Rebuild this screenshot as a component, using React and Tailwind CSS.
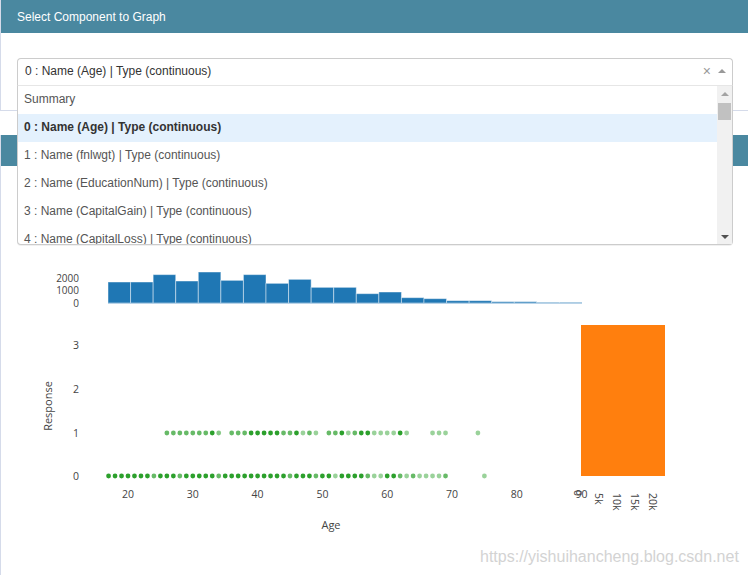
import React from "react";

const hist = [1680, 1680, 2270, 1760, 2480, 1813, 2270, 1573, 1893, 1253, 1253, 747, 880, 427, 347, 187, 187, 107, 107, 53, 53];

const ax = (a) => 128 + (a - 20) * 6.48;

const D = 1, M = 0.72, L = 0.48;

const row0 = {};
for (let a = 17; a <= 51; a++) row0[a] = D;
[24, 28, 34, 45, 49].forEach((a) => (row0[a] = M));
Object.assign(row0, {
  52: L, 53: D, 54: D, 55: D, 56: D, 57: M, 58: L, 59: L, 60: D, 61: D, 62: M, 63: L,
  64: M, 65: L, 66: L, 67: L, 68: L, 69: M, 75: L,
});

const row1 = {};
for (let a = 26; a <= 34; a++) row1[a] = M;
row1[33] = D;
row1[34] = L + 0.1;
Object.assign(row1, {
  36: M, 37: M, 38: M, 39: D, 40: D, 41: D, 42: D, 43: D, 44: M, 45: M, 46: D, 47: L, 48: M, 49: L,
  51: M, 52: M, 53: D, 54: L, 55: M, 56: D, 57: D, 58: L, 59: L, 60: L, 61: L, 62: D, 63: L,
  67: L, 68: L, 69: L, 74: L,
});

const options = [
  "Summary",
  "0 : Name (Age) | Type (continuous)",
  "1 : Name (fnlwgt) | Type (continuous)",
  "2 : Name (EducationNum) | Type (continuous)",
  "3 : Name (CapitalGain) | Type (continuous)",
  "4 : Name (CapitalLoss) | Type (continuous)",
];

function Select() {
  return (
    <div className="relative w-[716px] font-['Liberation_Sans',Arial,sans-serif] text-[12px]">
      <div className="h-[28px] border border-[#ccc] border-b-[#e6e6e6] rounded-t-[4px] bg-white flex items-center pl-[7px] pr-[6px] pb-[2px] text-[#333]">
        <span className="flex-1">0 : Name (Age) | Type (continuous)</span>
        <span className="text-[#999] text-[14px] leading-none mr-[7px]">×</span>
        <span className="w-0 h-0 border-l-[4px] border-r-[4px] border-b-[4px] border-l-transparent border-r-transparent border-b-[#999]"></span>
      </div>
      <div className="absolute left-0 right-0 top-[28px] h-[159px] border border-t-0 border-[#ccc] rounded-b-[4px] bg-white flex shadow-[0_1px_0_rgba(0,0,0,0.06)] z-10">
        <div className="flex-1 overflow-hidden">
          {options.map((o, i) => (
            <div
              key={o}
              className={
                "h-[28px] flex items-center pl-[6px] pb-[2px] " +
                (i === 1 ? "bg-[#e4f1fd] text-[#333] font-bold" : "text-[#555]")
              }
            >
              {o}
            </div>
          ))}
        </div>
        <div className="w-[15px] bg-[#f1f1f1] flex flex-col items-center">
          <div className="h-[15px] w-full flex items-center justify-center">
            <span className="w-0 h-0 border-l-[4px] border-r-[4px] border-b-[4px] border-l-transparent border-r-transparent border-b-[#a3a3a3]"></span>
          </div>
          <div className="mt-[2px] h-[17px] w-[13px] bg-[#c1c1c1]"></div>
          <div className="flex-1"></div>
          <div className="h-[15px] w-full flex items-center justify-center">
            <span className="w-0 h-0 border-l-[4px] border-r-[4px] border-t-[4px] border-l-transparent border-r-transparent border-t-[#505050]"></span>
          </div>
        </div>
      </div>
    </div>
  );
}

function Chart() {
  const bw = (582 - 108) / hist.length;
  const xt = [20, 30, 40, 50, 60, 70, 80, 90];
  const kt = [
    ["5k", 599],
    ["10k", 617],
    ["15k", 635],
    ["20k", 653],
  ];
  return (
    <svg width="747" height="409" className="block">
      <g transform="translate(-1,-166)" fontFamily="'Open Sans', sans-serif" fill="#444">
        {hist.map((v, i) => {
          const h = v * 0.0125;
          return (
            <rect
              key={i}
              x={108 + i * bw}
              y={303 - h}
              width={bw}
              height={h}
              fill="#1f77b4"
              stroke="rgba(255,255,255,0.45)"
              strokeWidth="1"
            />
          );
        })}
        <line x1="108" y1="303.5" x2="582" y2="303.5" stroke="#b9d3e8" strokeWidth="1" />
        {[
          ["2000", 278],
          ["1000", 290.5],
          ["0", 303],
        ].map(([t, y]) => (
          <text key={t} x="79" y={y} dy="0.35em" textAnchor="end" fontSize="10">
            {t}
          </text>
        ))}

        {[
          ["3", 345],
          ["2", 389],
          ["1", 433],
          ["0", 476],
        ].map(([t, y]) => (
          <text key={t} x="79" y={y} dy="0.35em" textAnchor="end" fontSize="10.5">
            {t}
          </text>
        ))}

        <text
          transform="translate(48,406) rotate(-90)"
          textAnchor="middle"
          dy="0.35em"
          fontSize="11"
        >
          Response
        </text>

        {Object.entries(row0).map(([a, o]) => (
          <circle key={"r0" + a} cx={ax(+a)} cy="476" r="2.4" fill="#2ca02c" fillOpacity={o} />
        ))}
        {Object.entries(row1).map(([a, o]) => (
          <circle key={"r1" + a} cx={ax(+a)} cy="433" r="2.4" fill="#2ca02c" fillOpacity={o} />
        ))}

        {xt.map((t) => (
          <text key={t} x={ax(t)} y="494" dy="0.35em" textAnchor="middle" fontSize="10.5">
            {t}
          </text>
        ))}
        <text x="331" y="525" dy="0.35em" textAnchor="middle" fontSize="11">
          Age
        </text>

        <rect x="581" y="325" width="84" height="151" fill="#ff7f0e" />
        <text transform="translate(578,490) rotate(90)" dy="0.35em" fontSize="10.5">
          0
        </text>
        {kt.map(([t, x]) => (
          <text key={t} transform={`translate(${x},493) rotate(90)`} dy="0.35em" fontSize="10.5">
            {t}
          </text>
        ))}
      </g>
    </svg>
  );
}

export default function App() {
  return (
    <div className="relative w-[748px] h-[575px] overflow-hidden bg-white">
      <div className="border-l border-b border-[#d5dbea]">
        <div className="h-[33px] bg-[#4a88a0] flex items-center pl-[16px] text-white text-[12px] font-['Liberation_Sans',Arial,sans-serif]">
          Select Component to Graph
        </div>
        <div className="h-[77px] pt-[25px] pl-[16px]">
          <Select />
        </div>
      </div>
      <div className="mt-[24px] border-l border-[#d5dbea]">
        <div className="h-[31px] bg-[#4a88a0]"></div>
        <Chart />
      </div>
      <div className="absolute left-[480px] top-[547px] text-[16px] leading-[20px] text-[#d3d3d3] font-['Liberation_Sans',Arial,sans-serif] whitespace-nowrap">
        https://yishuihancheng.blog.csdn.net
      </div>
    </div>
  );
}
